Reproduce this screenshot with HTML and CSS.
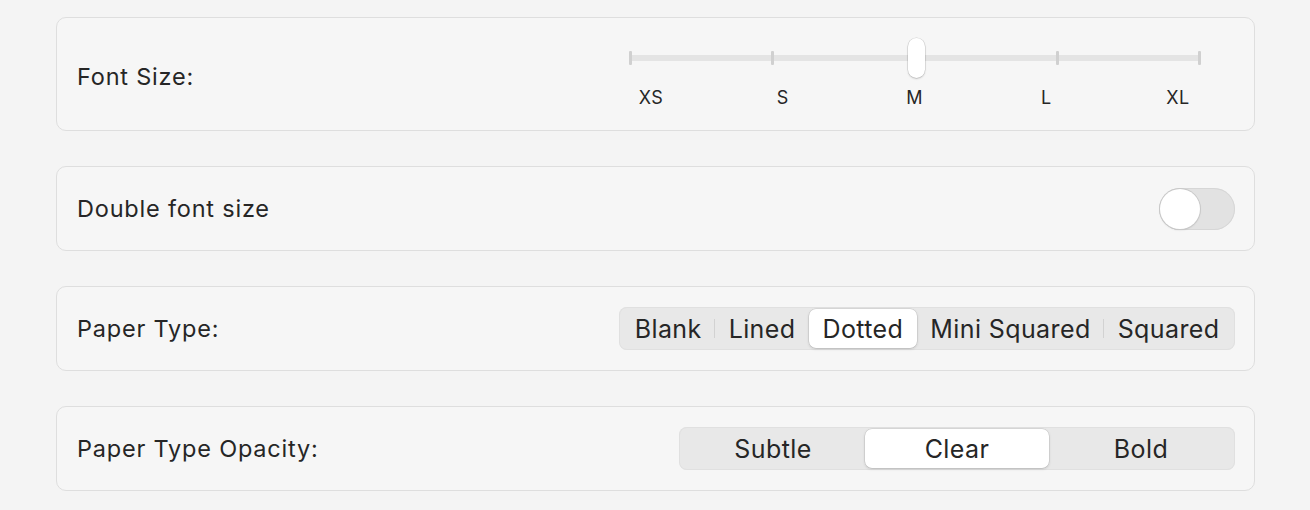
FILE: index.html
```html
<!DOCTYPE html>
<html>
<head>
<meta charset="utf-8">
<link rel="stylesheet" href="styles.css">
</head>
<body>
<div class="page">
  <div class="card card-tall">
    <div class="label">Font Size:</div>
    <div class="slider">
      <div class="track-wrap">
        <div class="track"></div>
        <div class="ticks">
          <span class="tick"></span><span class="tick"></span><span class="tick hidden"></span><span class="tick"></span><span class="tick"></span>
        </div>
        <div class="thumb"></div>
      </div>
      <div class="slider-labels">
        <span>XS</span><span>S</span><span>M</span><span>L</span><span>XL</span>
      </div>
    </div>
  </div>
  <div class="card">
    <div class="label">Double font size</div>
    <div class="toggle"><div class="knob"></div></div>
  </div>
  <div class="card">
    <div class="label">Paper Type:</div>
    <div class="seg">
      <div class="seg-item sep">Blank</div>
      <div class="seg-item">Lined</div>
      <div class="seg-item active">Dotted</div>
      <div class="seg-item sep">Mini Squared</div>
      <div class="seg-item">Squared</div>
    </div>
  </div>
  <div class="card">
    <div class="label">Paper Type Opacity:</div>
    <div class="seg seg-equal">
      <div class="seg-item">Subtle</div>
      <div class="seg-item active">Clear</div>
      <div class="seg-item">Bold</div>
    </div>
  </div>
</div>
</body>
</html>
```
FILE: styles.css
```css
html, body {
  margin: 0;
  padding: 0;
  background: #f4f4f4;
  font-family: Inter, "Liberation Sans", sans-serif;
  color: #262626;
}
.page {
  padding: 17px 55px 0 56px;
  display: flex;
  flex-direction: column;
  gap: 35px;
}
.card {
  box-sizing: border-box;
  height: 85px;
  border: 1px solid #dedede;
  border-radius: 10px;
  background: #f6f6f6;
  display: flex;
  align-items: center;
  justify-content: space-between;
  padding: 0 19px 0 20px;
}
.card-tall {
  height: 114px;
  align-items: flex-start;
  padding-top: 20px;
}
.card-tall .label {
  margin-top: 24px;
}
.label {
  font-size: 23.5px;
  letter-spacing: 0.8px;
}
.slider {
  width: 572px;
  margin-right: 34px;
  display: flex;
  flex-direction: column;
}
.track-wrap {
  position: relative;
  height: 40px;
}
.track {
  position: absolute;
  left: 0;
  right: 0;
  top: 17px;
  height: 6px;
  border-radius: 3px;
  background: #e4e4e4;
}
.ticks {
  position: absolute;
  left: 0;
  right: 0;
  top: 13px;
  display: flex;
  justify-content: space-between;
}
.tick {
  width: 3px;
  height: 14px;
  border-radius: 1px;
  background: #d0d0d0;
}
.tick.hidden { visibility: hidden; }
.thumb {
  position: absolute;
  left: 279px;
  top: 0;
  width: 17px;
  height: 40px;
  border-radius: 9px;
  background: #fff;
  box-shadow: 0 0 0 0.5px rgba(0,0,0,0.15), 0 1px 2px rgba(0,0,0,0.18);
}
.slider-labels {
  margin-top: 10px;
  padding: 0 3px 0 2px;
  display: flex;
  justify-content: space-between;
  font-size: 18px;
  letter-spacing: 0.4px;
  height: 20px;
  line-height: 20px;
}
.slider-labels span {
  width: 40px;
  text-align: center;
}
.toggle {
  width: 76px;
  height: 42px;
  border-radius: 21px;
  background: #e2e2e2;
  box-shadow: inset 0 0 0 1px #d6d6d6;
  position: relative;
}
.knob {
  position: absolute;
  left: 1px;
  top: 1px;
  width: 40px;
  height: 40px;
  border-radius: 50%;
  background: #fff;
  box-shadow: 0 0 0 1px #c8c8c8, 0 1px 2px rgba(0,0,0,0.15);
}
.seg {
  display: flex;
  align-items: stretch;
  height: 43px;
  box-sizing: border-box;
  padding: 2px;
  background: #e8e8e8;
  border-radius: 8px;
  box-shadow: inset 0 0 0 1px #e0e0e0;
}
.seg-item {
  display: flex;
  align-items: center;
  justify-content: center;
  padding: 0 13.5px;
  font-size: 25px;
  letter-spacing: 0.4px;
  border-radius: 7px;
  position: relative;
}
.seg-item.sep::after {
  content: "";
  position: absolute;
  right: 0;
  top: 10px;
  bottom: 10px;
  width: 1px;
  background: #d2d2d2;
}
.seg-item.active {
  background: #fff;
  box-shadow: 0 0 0 0.5px rgba(0,0,0,0.12), 0 1px 3px rgba(0,0,0,0.16);
}
.seg-equal .seg-item {
  width: 184px;
  padding: 0;
  box-sizing: border-box;
}
```
